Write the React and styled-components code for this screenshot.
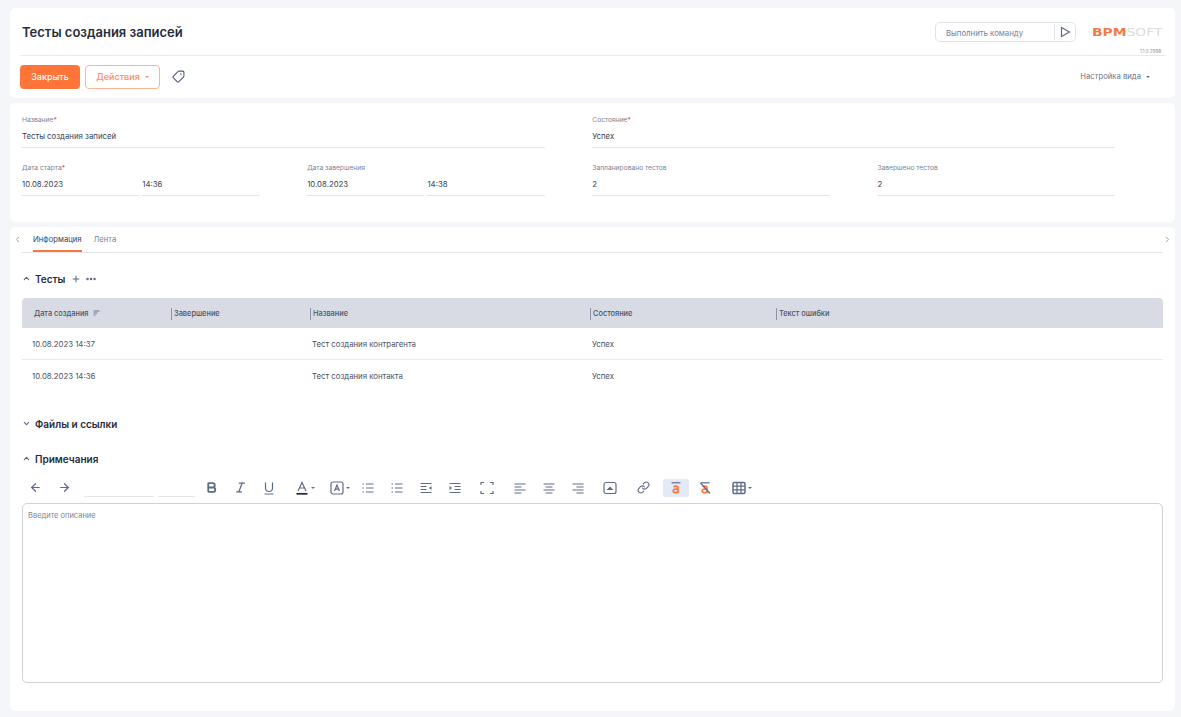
import React from "react";
import styled, { createGlobalStyle } from "styled-components";
import {
  ArrowLeft,
  ArrowRight,
  Bold,
  ChevronDown,
  ChevronLeft,
  ChevronRight,
  ChevronUp,
  Ellipsis,
  Italic,
  Link,
  Plus,
  Tag,
} from "lucide-react";

const GlobalStyle = createGlobalStyle`
  html, body {
    margin: 0;
    padding: 0;
    background: #f4f6fa;
  }
  body {
    font-family: Inter, "Noto Sans", "Liberation Sans", sans-serif;
    color: #2c3442;
  }
`;

const Page = styled.div`
  width: 1181px;
  height: 717px;
  box-sizing: border-box;
  padding: 8px 6px 6px 10px;
  display: flex;
  flex-direction: column;
  gap: 5px;
  overflow: hidden;
`;

const Panel = styled.section`
  background: #fff;
  border-radius: 5px;
`;

const HeadPanel = styled(Panel)`
  height: 90px;
  padding: 0 10px;
  box-sizing: border-box;
`;

const TitleRow = styled.div`
  height: 48px;
  box-sizing: border-box;
  padding-left: 2px;
  display: flex;
  align-items: center;
  border-bottom: 1px solid #e8eaee;
`;

const Title = styled.h1`
  margin: 0;
  font-size: 13px;
  font-weight: 600;
  color: #252d3a;
  flex: 1;
`;

const CommandBox = styled.div`
  width: 141px;
  height: 20px;
  box-sizing: border-box;
  border: 1px solid #dfe2e8;
  border-radius: 5px;
  display: flex;
  align-items: center;
  margin: 1px 16px 0 0;
`;

const CommandText = styled.span`
  flex: 1;
  padding: 1px 0 0 10px;
  font-size: 7.8px;
  color: #77809a;
`;

const CommandRun = styled.span`
  width: 20px;
  height: 16px;
  border-left: 1px solid #dfe2e8;
  display: flex;
  align-items: center;
  justify-content: center;
  color: #5f6c88;
`;

const LogoBlock = styled.div`
  width: 72px;
  align-self: stretch;
  position: relative;
  margin-right: 1px;
`;

const Logo = styled.div`
  position: absolute;
  left: 0;
  top: 18px;
  font-family: "DejaVu Sans", sans-serif;
  font-size: 11px;
  line-height: 13px;
  transform: scaleX(1.26);
  transform-origin: left center;
  white-space: nowrap;
`;

const LogoBpm = styled.span`
  color: #f4794a;
  font-weight: 700;
`;

const LogoSoft = styled.span`
  color: #d9dce1;
  font-weight: 400;
`;

const Version = styled.div`
  position: absolute;
  right: 3px;
  top: 41px;
  font-size: 4.5px;
  color: #8b919c;
`;

const ActionRow = styled.div`
  height: 41px;
  display: flex;
  align-items: center;
  gap: 5px;
`;

const PrimaryButton = styled.button`
  width: 60px;
  height: 24px;
  border: none;
  border-radius: 4px;
  background: #ff7438;
  color: #fff;
  font: 500 9px Inter, sans-serif;
  padding: 0;
`;

const OutlineButton = styled.button`
  width: 75px;
  height: 24px;
  border: 1px solid #ffb394;
  border-radius: 4px;
  background: #fff;
  color: #ff8c5c;
  font: 500 9px Inter, sans-serif;
  padding: 0;
  display: flex;
  align-items: center;
  justify-content: center;
  gap: 5px;
`;

const Caret = styled.i`
  display: inline-block;
  width: 0;
  height: 0;
  border-left: 2.5px solid transparent;
  border-right: 2.5px solid transparent;
  border-top: 2.5px solid currentColor;
`;

const TagButton = styled.span`
  display: flex;
  margin-left: 7px;
  color: #4d5b76;
  transform: scaleX(-1);
`;

const ViewSettings = styled.span`
  margin-left: auto;
  margin-right: 15px;
  display: flex;
  align-items: center;
  gap: 5px;
  font-size: 7.7px;
  color: #6b748a;
`;

const FormPanel = styled(Panel)`
  height: 119px;
  box-sizing: border-box;
  padding: 12px 60px 0 12px;
  display: grid;
  grid-template-columns: repeat(4, 1fr);
  column-gap: 47.5px;
  grid-auto-rows: 48px;
`;

const Field = styled.div`
  grid-column: span ${(p) => p.$span || 1};
  min-width: 0;
`;

const FieldLabel = styled.div`
  font-size: 6.7px;
  line-height: 10px;
  color: #7d8595;
`;

const Required = styled.span`
  color: #e5484d;
`;

const FieldValue = styled.div`
  height: 23px;
  padding-top: 3px;
  box-sizing: border-box;
  font-size: 7.8px;
  line-height: 16px;
  color: #3a4250;
  border-bottom: 1px solid #e4e6ea;
  flex: ${(p) => p.$flex || "none"};
`;

const FieldPair = styled.div`
  display: flex;
  gap: 3px;
`;

const ContentPanel = styled(Panel)`
  height: 485px;
  padding: 0 12px;
  position: relative;
`;

const TabBar = styled.div`
  height: 26px;
  display: flex;
  gap: 12px;
  padding-left: 11px;
  border-bottom: 1px solid #e4e6ea;
  box-sizing: border-box;
`;

const Tab = styled.div`
  font-size: 7.7px;
  line-height: 25px;
  height: 25px;
  box-sizing: border-box;
  color: ${(p) => (p.$active ? "#3a4250" : "#7d8595")};
  border-bottom: ${(p) => (p.$active ? "2px solid #ff7438" : "none")};
`;

const TabArrow = styled.span`
  position: absolute;
  top: 8px;
  display: flex;
  color: #9aa1ae;
  ${(p) => (p.$right ? "right: 3px;" : "left: 3px;")}
`;

const SectionHead = styled.div`
  display: flex;
  align-items: center;
  height: 16px;
  margin-top: ${(p) => p.$top}px;
  font-size: 10px;
  font-weight: 600;
  color: #252d3a;
`;

const SectionChevron = styled.span`
  display: flex;
  width: 13px;
  color: #56647e;
`;

const SectionTool = styled.span`
  display: flex;
  margin-left: ${(p) => p.$left}px;
  color: #56647e;
`;

const Table = styled.div`
  margin-top: 11px;
`;

const TableHead = styled.div`
  height: 30px;
  box-sizing: border-box;
  padding-top: 2px;
  background: #d8dbe3;
  border-radius: 4px 4px 0 0;
  display: grid;
  grid-template-columns: 149px 139px 280px 186px 1fr;
  align-items: center;
  font-size: 7.4px;
  font-weight: 500;
  color: #4b5363;
`;

const HeadCell = styled.div`
  height: 12px;
  line-height: 12px;
  padding-left: ${(p) => (p.$first ? 12 : 2)}px;
  border-left: ${(p) => (p.$first ? "none" : "1px solid #8b93a5")};
  display: flex;
  align-items: center;
  gap: 5px;
`;

const SortIcon = styled.svg`
  width: 7px;
  height: 7px;
  color: #6d7588;
`;

const TableRow = styled.div`
  height: 32px;
  box-sizing: border-box;
  padding-top: ${(p) => (p.$last ? 0 : 1)}px;
  display: grid;
  grid-template-columns: 149px 139px 280px 186px 1fr;
  align-items: center;
  font-size: 7.8px;
  color: #4b5363;
  border-bottom: ${(p) => (p.$last ? "none" : "1px solid #e8eaee")};
`;

const Cell = styled.div`
  padding-left: ${(p) => (p.$first ? 10 : 2)}px;
`;

const Toolbar = styled.div`
  display: flex;
  align-items: center;
  height: 26px;
  margin-top: 8px;
  color: #5f6c88;
`;

const ToolButton = styled.span`
  width: 26px;
  height: 18px;
  margin-left: ${(p) => (p.$push === undefined ? 3 : p.$push)}px;
  display: flex;
  align-items: center;
  justify-content: center;
  gap: 2px;
  background: ${(p) => (p.$active ? "#e3e9f6" : "transparent")};
  border-radius: 2px;
`;

const ToolInput = styled.span`
  display: block;
  width: ${(p) => p.$w}px;
  height: 13px;
  margin-left: ${(p) => p.$push}px;
  margin-bottom: 4px;
  border-bottom: 1px solid #e4e6ea;
  align-self: flex-end;
`;

const Editor = styled.div`
  height: 180px;
  margin-top: 2px;
  box-sizing: border-box;
  border: 1px solid #cfd2d8;
  border-radius: 5px;
  padding: 6px 5px;
  font-size: 7.5px;
  line-height: 12px;
  color: #7d8595;
`;

const Ico = ({ children, w = 14, h = 14, vb = "0 0 14 14" }) => (
  <svg width={w} height={h} viewBox={vb} fill="none" stroke="currentColor" strokeWidth="1.2">
    {children}
  </svg>
);

const ListLines = () => (
  <>
    <path d="M5 3h7.500M5 7h7.500M5 11h7.500" />
    <path d="M1.500 3h1.500M1.500 7h1.500M1.500 11h1.500" />
  </>
);

const LetterA = () => (
  <path
    d="M4.700 5.800c1-1 4.300-1.200 4.300.8V12M9 8.300c-3-.6-4.800 0-4.800 1.800 0 2.200 3.500 2 4.800.3"
    stroke="#ff7438"
    strokeWidth="1.700"
  />
);

const columns = ["Завершение", "Название", "Состояние", "Текст ошибки"];

const rows = [
  { date: "10.08.2023 14:37", name: "Тест создания контрагента", state: "Успех" },
  { date: "10.08.2023 14:36", name: "Тест создания контакта", state: "Успех" },
];

export default function App() {
  return (
    <>
      <GlobalStyle />
      <Page>
        <HeadPanel>
          <TitleRow>
            <Title>Тесты создания записей</Title>
            <CommandBox>
              <CommandText>Выполнить команду</CommandText>
              <CommandRun>
                <Ico w={12} h={12} vb="0 0 12 12">
                  <path d="M2.500 1.500 10.500 6l-8 4.500z" />
                </Ico>
              </CommandRun>
            </CommandBox>
            <LogoBlock>
              <Logo>
                <LogoBpm>BPM</LogoBpm>
                <LogoSoft>SOFT</LogoSoft>
              </Logo>
              <Version>1.1.0.2998</Version>
            </LogoBlock>
          </TitleRow>
          <ActionRow>
            <PrimaryButton>Закрыть</PrimaryButton>
            <OutlineButton>
              Действия <Caret />
            </OutlineButton>
            <TagButton>
              <Tag size={13} strokeWidth={2} />
            </TagButton>
            <ViewSettings>
              Настройка вида <Caret />
            </ViewSettings>
          </ActionRow>
        </HeadPanel>

        <FormPanel>
          <Field $span={2}>
            <FieldLabel>
              Название<Required>*</Required>
            </FieldLabel>
            <FieldValue>Тесты создания записей</FieldValue>
          </Field>
          <Field $span={2}>
            <FieldLabel>
              Состояние<Required>*</Required>
            </FieldLabel>
            <FieldValue>Успех</FieldValue>
          </Field>
          <Field>
            <FieldLabel>
              Дата старта<Required>*</Required>
            </FieldLabel>
            <FieldPair>
              <FieldValue $flex="1">10.08.2023</FieldValue>
              <FieldValue $flex="1">14:36</FieldValue>
            </FieldPair>
          </Field>
          <Field>
            <FieldLabel>Дата завершения</FieldLabel>
            <FieldPair>
              <FieldValue $flex="1">10.08.2023</FieldValue>
              <FieldValue $flex="1">14:38</FieldValue>
            </FieldPair>
          </Field>
          <Field>
            <FieldLabel>Запланировано тестов</FieldLabel>
            <FieldValue>2</FieldValue>
          </Field>
          <Field>
            <FieldLabel>Завершено тестов</FieldLabel>
            <FieldValue>2</FieldValue>
          </Field>
        </FormPanel>

        <ContentPanel>
          <TabArrow>
            <ChevronLeft size={9} strokeWidth={2.6} />
          </TabArrow>
          <TabBar>
            <Tab $active>Информация</Tab>
            <Tab>Лента</Tab>
          </TabBar>
          <TabArrow $right>
            <ChevronRight size={9} strokeWidth={2.6} />
          </TabArrow>

          <SectionHead $top={18}>
            <SectionChevron>
              <ChevronUp size={9} strokeWidth={2.8} />
            </SectionChevron>
            Тесты
            <SectionTool $left={6}>
              <Plus size={10} strokeWidth={2.4} />
            </SectionTool>
            <SectionTool $left={4}>
              <Ellipsis size={12} strokeWidth={3} />
            </SectionTool>
          </SectionHead>

          <Table>
            <TableHead>
              <HeadCell $first>
                Дата создания
                <SortIcon viewBox="0 0 7 7" fill="none" stroke="currentColor" strokeWidth="1">
                  <path d="M.5 1h6M.5 3h4M.5 5h2" />
                </SortIcon>
              </HeadCell>
              {columns.map((c) => (
                <HeadCell key={c}>{c}</HeadCell>
              ))}
            </TableHead>
            {rows.map((r, i) => (
              <TableRow key={r.date} $last={i === rows.length - 1}>
                <Cell $first>{r.date}</Cell>
                <Cell />
                <Cell>{r.name}</Cell>
                <Cell>{r.state}</Cell>
                <Cell />
              </TableRow>
            ))}
          </Table>

          <SectionHead $top={24}>
            <SectionChevron>
              <ChevronDown size={9} strokeWidth={2.8} />
            </SectionChevron>
            Файлы и ссылки
          </SectionHead>
          <SectionHead $top={19}>
            <SectionChevron>
              <ChevronUp size={9} strokeWidth={2.8} />
            </SectionChevron>
            Примечания
          </SectionHead>

          <Toolbar>
            <ToolButton $push={0}>
              <ArrowLeft size={13} strokeWidth={2.2} />
            </ToolButton>
            <ToolButton>
              <ArrowRight size={13} strokeWidth={2.2} />
            </ToolButton>
            <ToolInput $w={70} $push={7} />
            <ToolInput $w={37} $push={4} />
            <ToolButton>
              <Bold size={13} strokeWidth={3.4} />
            </ToolButton>
            <ToolButton>
              <Italic size={13} strokeWidth={2.4} />
            </ToolButton>
            <ToolButton>
              <Ico>
                <path d="M3.500 1.500v5.500a3.500 3.500 0 0 0 7 0V1.500M2.500 13h9" />
              </Ico>
            </ToolButton>
            <ToolButton $push={10}>
              <Ico>
                <path d="M3 10 7 1.500 11 10M4.400 7h5.200" />
                <path d="M1.500 12.800h11" stroke="#1e2530" strokeWidth="1.700" />
              </Ico>
              <Caret />
            </ToolButton>
            <ToolButton $push={9}>
              <Ico>
                <rect x="1" y="1" width="12" height="12" rx="2" />
                <path d="M4.500 10 7 4l2.500 6M5.300 8.200h3.400" />
              </Ico>
              <Caret />
            </ToolButton>
            <ToolButton $push={2}>
              <Ico>
                <ListLines />
              </Ico>
            </ToolButton>
            <ToolButton>
              <Ico>
                <ListLines />
              </Ico>
            </ToolButton>
            <ToolButton>
              <Ico>
                <path d="M1.500 2.500h11M1.500 5.500h6M1.500 8.500h6M1.500 11.500h11" />
                <path d="M12.500 5 10 7l2.500 2z" fill="currentColor" stroke="none" />
              </Ico>
            </ToolButton>
            <ToolButton>
              <Ico>
                <path d="M1.500 2.500h11M6.500 5.500h6M6.500 8.500h6M1.500 11.500h11" />
                <path d="M1.500 5 4 7 1.500 9z" fill="currentColor" stroke="none" />
              </Ico>
            </ToolButton>
            <ToolButton $push={6}>
              <Ico>
                <path d="M1 4V1.500h3M10 1.500h3V4M13 10v2.500h-3M4 12.500H1V10" />
              </Ico>
            </ToolButton>
            <ToolButton $push={7}>
              <Ico>
                <path d="M1.500 3h11M1.500 6h7M1.500 9h11M1.500 12h7" />
              </Ico>
            </ToolButton>
            <ToolButton>
              <Ico>
                <path d="M1.500 3h11M3.500 6h7M1.500 9h11M3.500 12h7" />
              </Ico>
            </ToolButton>
            <ToolButton>
              <Ico>
                <path d="M1.500 3h11M5.500 6h7M1.500 9h11M5.500 12h7" />
              </Ico>
            </ToolButton>
            <ToolButton $push={6}>
              <Ico>
                <rect x="1" y="1.500" width="12" height="11" rx="2" />
                <path d="M3.500 9 7 5.500 10.500 9z" fill="currentColor" stroke="none" />
              </Ico>
            </ToolButton>
            <ToolButton $push={7}>
              <Link size={13} strokeWidth={2} />
            </ToolButton>
            <ToolButton $push={7} $active>
              <Ico>
                <path d="M2.500 1.800h9" />
                <LetterA />
              </Ico>
            </ToolButton>
            <ToolButton>
              <Ico>
                <path d="M2.500 1.800h9" />
                <LetterA />
                <path d="M2.500 2 12 12.500" />
              </Ico>
            </ToolButton>
            <ToolButton $push={11}>
              <Ico>
                <rect x="1" y="1.500" width="12" height="11" rx="1.500" strokeWidth="1.500" />
                <path d="M1 5.200h12M1 8.800h12M5 1.500v11M9 1.500v11" />
              </Ico>
              <Caret />
            </ToolButton>
          </Toolbar>

          <Editor>Введите описание</Editor>
        </ContentPanel>
      </Page>
    </>
  );
}
